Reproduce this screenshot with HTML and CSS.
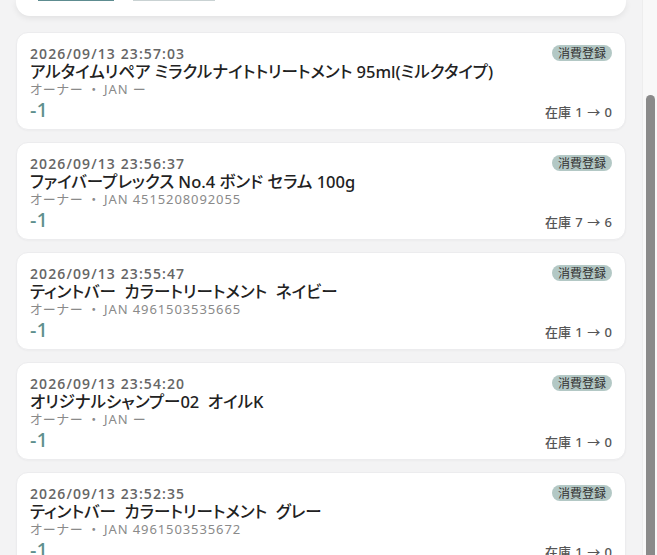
FILE: index.html
```html
<!DOCTYPE html>
<html lang="ja">
<head>
<meta charset="utf-8">
<link rel="stylesheet" href="styles.css">
</head>
<body>
<div class="layout">
  <main class="content">
    <section class="top-card">
      <div class="top-actions">
        <span class="tab tab-active"></span>
        <span class="tab"></span>
      </div>
    </section>

    <article class="log">
      <div class="log-head">
        <span class="log-date">2026/09/13 23:57:03</span>
        <span class="badge">消費登録</span>
      </div>
      <div class="log-title">アルタイムリペア ミラクルナイトトリートメント 95ml(ミルクタイプ)</div>
      <div class="log-meta">オーナー<span class="sep">・</span>JAN ー</div>
      <div class="log-foot">
        <span class="log-qty">-1</span>
        <span class="log-stock">在庫 1 → 0</span>
      </div>
    </article>

    <article class="log">
      <div class="log-head">
        <span class="log-date">2026/09/13 23:56:37</span>
        <span class="badge">消費登録</span>
      </div>
      <div class="log-title">ファイバープレックス No.4 ボンド セラム 100g</div>
      <div class="log-meta">オーナー<span class="sep">・</span>JAN 4515208092055</div>
      <div class="log-foot">
        <span class="log-qty">-1</span>
        <span class="log-stock">在庫 7 → 6</span>
      </div>
    </article>

    <article class="log">
      <div class="log-head">
        <span class="log-date">2026/09/13 23:55:47</span>
        <span class="badge">消費登録</span>
      </div>
      <div class="log-title">ティントバー  カラートリートメント  ネイビー</div>
      <div class="log-meta">オーナー<span class="sep">・</span>JAN 4961503535665</div>
      <div class="log-foot">
        <span class="log-qty">-1</span>
        <span class="log-stock">在庫 1 → 0</span>
      </div>
    </article>

    <article class="log">
      <div class="log-head">
        <span class="log-date">2026/09/13 23:54:20</span>
        <span class="badge">消費登録</span>
      </div>
      <div class="log-title">オリジナルシャンプー02  オイルK</div>
      <div class="log-meta">オーナー<span class="sep">・</span>JAN ー</div>
      <div class="log-foot">
        <span class="log-qty">-1</span>
        <span class="log-stock">在庫 1 → 0</span>
      </div>
    </article>

    <article class="log">
      <div class="log-head">
        <span class="log-date">2026/09/13 23:52:35</span>
        <span class="badge">消費登録</span>
      </div>
      <div class="log-title">ティントバー  カラートリートメント  グレー</div>
      <div class="log-meta">オーナー<span class="sep">・</span>JAN 4961503535672</div>
      <div class="log-foot">
        <span class="log-qty">-1</span>
        <span class="log-stock">在庫 1 → 0</span>
      </div>
    </article>
  </main>
  <div class="scrollbar"><div class="thumb"></div></div>
</div>
</body>
</html>
```

FILE: styles.css
```css
* { box-sizing: border-box; }
html, body { margin: 0; padding: 0; height: 100%; overflow: hidden; }
body {
  background: #f3f3f4;
  font-family: "Noto Sans", "Noto Sans CJK JP", sans-serif;
  color: #222;
}
.layout {
  display: flex;
  height: 555px;
}
.content {
  flex: 1;
  padding: 0 16px;
  display: flex;
  flex-direction: column;
  gap: 12px;
  overflow: hidden;
}
.top-card {
  flex: none;
  height: 16px;
  margin-bottom: 4px;
  background: #fff;
  border-radius: 0 0 14px 14px;
  box-shadow: 0 2px 6px rgba(0,0,0,0.08);
  padding: 0 0 0 22px;
}
.top-actions {
  display: flex;
  gap: 19px;
}
.tab {
  display: block;
  height: 1px;
  width: 76px;
  background: #5d8c90;
}
.tab + .tab {
  width: 82px;
  background: #c9d2d3;
}
.log {
  flex: none;
  height: 98px;
  background: #fff;
  border: 1px solid #ececee;
  border-radius: 12px;
  padding: 10px 13px 0 13px;
  box-shadow: 0 1px 2px rgba(0,0,0,0.03);
}
.log-head {
  display: flex;
  justify-content: space-between;
  align-items: center;
  height: 20px;
}
.log-date {
  font-family: "Open Sans", sans-serif;
  font-size: 14px;
  font-weight: 600;
  color: #666;
  letter-spacing: 1.1px;
}
.badge {
  font-family: "Noto Sans CJK JP", sans-serif;
  font-size: 12px;
  line-height: 16px;
  padding: 0 6px;
  border-radius: 9px;
  background: #b3c8c5;
  color: #333;
}
.log-title {
  font-family: "Noto Sans", "Noto Sans CJK JP", sans-serif;
  font-feature-settings: "palt";
  font-size: 16.5px;
  line-height: 18px;
  font-weight: 500;
  color: #222;
  white-space: pre;
}
.log-meta {
  font-family: "Noto Sans", "Noto Sans CJK JP", sans-serif;
  font-feature-settings: "palt";
  font-size: 13px;
  line-height: 16px;
  letter-spacing: 0.9px;
  color: #8a8a8a;
}
.sep {
  margin: 0 6px 0 7px;
}
.log-foot {
  display: flex;
  justify-content: space-between;
  align-items: baseline;
  line-height: 25px;
}
.log-qty {
  font-size: 20px;
  font-weight: 500;
  color: #5e8f8d;
}
.log-stock {
  font-family: "Noto Sans", "Noto Sans CJK JP", sans-serif;
  font-size: 13px;
  font-weight: 500;
  color: #555;
  word-spacing: 1px;
}
.scrollbar {
  flex: none;
  width: 15px;
  background: #f8f8f8;
  border-left: 1px solid #ededed;
  padding: 95px 2px 0 3px;
}
.thumb {
  height: 460px;
  background: #8a8a8a;
  border-radius: 5px 5px 0 0;
}
```
